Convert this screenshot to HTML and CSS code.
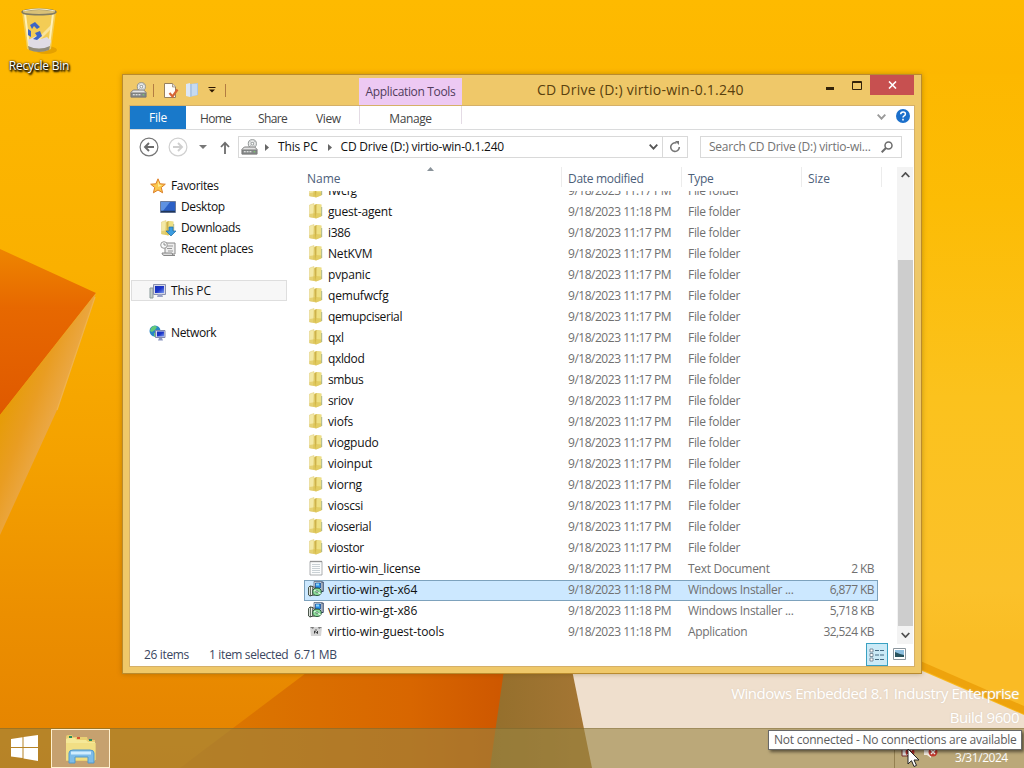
FILE: index.html
```html
<!DOCTYPE html>
<html lang="en">
<head>
<meta charset="utf-8">
<title>CD Drive (D:) virtio-win-0.1.240</title>
<link rel="stylesheet" href="styles.css">
</head>
<body>
<svg class="defs" width="0" height="0" aria-hidden="true">
  <defs>
    <linearGradient id="gScreen" x1="0" y1="0" x2="1" y2="1"><stop offset="0" stop-color="#1430b8"/><stop offset=".5" stop-color="#1c35c8"/><stop offset="1" stop-color="#7b9af0"/></linearGradient>
    <symbol id="folder" viewBox="0 0 16 16">
      <path d="M1.500 2 6 .5v14L1.500 14z" fill="#f3e9a6" stroke="#e0cd78" stroke-width=".5"/>
      <path d="M6 2 8 1l5.500.5v12L8 15.500 5 14z" fill="#e7d577"/>
      <path d="M6.500 2.500 8.500 1v9L7 15.200z" fill="#c4a63c" opacity=".75"/>
      <path d="M8.800 1.500 13 2v11l-4.500 1.500z" fill="#eee083"/>
      <path d="M1.500 11 8 10l5.500.5V13L8 15.500 1.500 14z" fill="#d9be48" opacity=".55"/>
      <path d="M13.700 4v9" stroke="#98a878" stroke-width=".8"/>
    </symbol>
    <symbol id="drive" viewBox="0 0 18 18">
      <circle cx="12" cy="5" r="4.300" fill="#e9eaea" stroke="#8a8f8f"/>
      <path d="m9 2 6 6M15 2 9 8" stroke="#a5acae" stroke-width=".7"/>
      <circle cx="12" cy="5" r="1.400" fill="#fff" stroke="#747979" stroke-width=".7"/>
      <path d="M3.500 8.500h11L17 11v5H1v-5z" fill="#e4e4e4" stroke="#777"/>
      <path d="M1.500 11.500h15v4h-15z" fill="#858989" stroke="#666" stroke-width=".6"/>
      <path d="M3 13.500h9" stroke="#fff" stroke-dasharray="2 1"/><path d="M13.500 13.500H15" stroke="#77df63"/>
    </symbol>
    <symbol id="msi" viewBox="0 0 16 16">
      <path d="M6 .5h7.500v8.500H6z" fill="#dfe5ea" stroke="#5b6b80" stroke-width=".8"/>
      <path d="M7.500 2h5v5h-5z" fill="#2a8fe6" stroke="#0f4590" stroke-width=".7"/>
      <path d="M8 2.500h3v2H8z" fill="#8bd6fb"/>
      <path d="M13.500 1h1.700v9.500h-2" fill="#c3cad2" stroke="#1c2e52" stroke-width=".9"/>
      <path d="M.6 6.500 2 5l3 .5V14l-3 1-1.400-1z" fill="#e9efe8" stroke="#263226" stroke-width=".9"/>
      <path d="M2.500 5v10" stroke="#455144" stroke-width=".8"/>
      <path d="M5 6.500 7 6v8l-2 .5z" fill="#fff" stroke="#333" stroke-width=".6"/>
      <ellipse cx="9" cy="10.800" rx="4.300" ry="3.700" fill="#8edd9a" stroke="#1c4a2b" stroke-width=".9"/>
      <path d="m6 9.500 3 1 3.500 2.500" stroke="#f0fff1" stroke-width="1.300"/><circle cx="9" cy="10.800" r="1.100" fill="#fff" stroke="#14502a" stroke-width=".6"/>
    </symbol>
    <symbol id="doc" viewBox="0 0 16 16">
      <path d="M2 1.500h12v13.500H2z" fill="#fbfcfc" stroke="#9a9d9e" stroke-width=".8"/>
      <path d="M2.500 1.500h11" stroke="#777" stroke-width="1.500" stroke-dasharray="1 1"/>
      <path d="M4 4.500h8M4 6.500h8M4 8.500h8M4 10.500h8M4 12.500h8" stroke="#bec5ca" stroke-width=".8"/>
    </symbol>
    <symbol id="app" viewBox="0 0 16 16">
      <path d="M2 4h12l-1 9H3z" fill="#d5d5d5"/><path d="M2 4h4L5 6zM14 4h-4l1 2z" fill="#777"/>
      <path d="M6.500 10.500V8l3 2.500V8" stroke="#3b3b3b" fill="none"/><circle cx="8" cy="7" r=".8" fill="#555"/>
    </symbol>
  </defs>
</svg>

<div class="screen">
  <svg class="wallpaper" width="1024" height="768" viewBox="0 0 1024 768" preserveAspectRatio="none">
    <defs>
      <linearGradient id="sky" x1="0" y1="0" x2="0" y2="1"><stop offset="0" stop-color="#feba00"/><stop offset=".35" stop-color="#fab000"/><stop offset=".6" stop-color="#f4a100"/><stop offset=".8" stop-color="#ec8f00"/><stop offset="1" stop-color="#e48200"/></linearGradient>
      <linearGradient id="right" gradientUnits="userSpaceOnUse" x1="0" y1="74" x2="0" y2="720"><stop offset="0" stop-color="#fdb800"/><stop offset=".2" stop-color="#fcbc05"/><stop offset=".5" stop-color="#fbc21d"/><stop offset=".8" stop-color="#fbc12a"/><stop offset="1" stop-color="#f8b71c"/></linearGradient>
      <linearGradient id="petal" x1="0" y1="0" x2="0" y2="1"><stop offset="0" stop-color="#ee8500"/><stop offset=".35" stop-color="#e76800"/><stop offset="1" stop-color="#df5900"/></linearGradient>
      <linearGradient id="fold" gradientUnits="userSpaceOnUse" x1="10" y1="385" x2="62" y2="405"><stop offset="0" stop-color="#e69c05"/><stop offset=".5" stop-color="#e99d22"/><stop offset="1" stop-color="#eba94a"/></linearGradient>
      <linearGradient id="rust" x1="0" x2="1"><stop offset="0" stop-color="#dd7a00"/><stop offset=".7" stop-color="#d86600"/><stop offset="1" stop-color="#cd5600"/></linearGradient>
      <linearGradient id="brown" x1="0" x2="1"><stop offset="0" stop-color="#946f2c"/><stop offset="1" stop-color="#a77735"/></linearGradient>
    </defs>
    <path fill="url(#sky)" d="M0 0h1024v768H0z"/>
    <path fill="url(#right)" d="M600 74h424v694H600z"/>
    <path fill="url(#petal)" d="M0 249 96 293 0 415z"/>
    <path fill="url(#fold)" d="M96 293 0 415v120L57 410z"/>
    <path d="M95 297 57 410" stroke="#efb350" stroke-width="1.200" fill="none"/>
    <path fill="url(#rust)" d="M310 670h200v98H180z"/>
    <path fill="url(#brown)" d="M504 670h72l24 98H490z"/>
    <path fill="#efdfcd" d="M572 670h348l104 45v53H592z"/>
    <path fill="#fabb25" d="M918 640h106v70L918 665z"/>
    <path fill="#eea30c" d="m918 660 106 46v8L918 668z"/>
  </svg>

  <div class="desktop-icon">
    <svg width="40" height="48" viewBox="0 0 40 48">
      <ellipse cx="27" cy="43" rx="11" ry="4" fill="#c78500" opacity=".45"/>
      <path d="M3 5h34l-5 37q-11 6-24 0z" fill="#f1cf64" opacity=".85"/>
      <path d="M6 7 10 39M34 7l-4 32" stroke="#fff0b6" stroke-width="2"/>
      <path d="m9 33 8-4 5 3 6-2 4 4-2 7q-10 4-20 0z" fill="#e0dce5"/>
      <path d="M9 39q11 5 22 0l-1 4q-10 4-20 0z" fill="#918b79"/>
      <path d="m20 30 12-12v4L20 34z" fill="#faeaae" opacity=".8"/>
      <path d="m11 18 5-3 5 5-3 2-3-3-2 3zM9 22l3 2v6l-3-2zM16 26l5-2 2 5-5 4-4-1 4-3z" fill="#3d65c6"/>
      <ellipse cx="20" cy="5" rx="17" ry="2.800" fill="#d9c177" stroke="#827b60" stroke-width="1.500"/>
      <path d="M4 4q16-4 32 0" stroke="#f6eecf" fill="none"/>
    </svg>
    <span>Recycle Bin</span>
  </div>

  <div class="watermark"><div class="wm1">Windows Embedded 8.1 Industry Enterprise</div><div class="wm2">Build 9600</div></div>

  <main class="window">
    <header class="titlebar">
      <div class="quick">
        <svg width="17" height="17"><use href="#drive"/></svg>
        <i class="vsep s1"></i>
        <svg class="props" width="16" height="17" viewBox="0 0 16 17"><path d="M1.500 1.500h8l3 3v11h-11z" fill="#fffdfa" stroke="#98805c"/><path d="M9.500 1.500v3.500H13" fill="#ddd" stroke="#98805c" stroke-width=".7"/><path d="m6.500 11 3 3.500 5-7" fill="none" stroke="#d76535" stroke-width="2.200"/></svg>
        <svg class="newf" width="14" height="16" viewBox="0 0 14 16"><path d="m1 2 4-1v14l-4-1z" fill="#dce7f6"/><path d="m5 2 8-1v12l-8 2z" fill="#aec7e4"/><path d="M7 2h5v11l-5 1z" fill="#c6daf0"/></svg>
        <svg class="qarrow" width="8" height="6" viewBox="0 0 8 6"><path d="M.5.500h7" stroke="#2b1500"/><path d="M1 2.500h6L4 5.500z" fill="#2b1500"/></svg>
        <i class="vsep s2"></i>
      </div>
      <div class="tools-tab"><span class="t-tools">Application Tools</span></div>
      <h1><span class="t-title">CD Drive (D:) virtio-win-0.1.240</span></h1>
      <div class="captions">
        <svg width="8" height="3"><path fill="#33230a" d="M0 0h8v3H0z"/></svg>
        <svg class="max" width="10" height="9"><path d="M.5 2V.5h9v8h-9z" fill="none" stroke="#33230a"/><path d="M0 1.500h10" stroke="#33230a"/></svg>
        <div class="close"><svg width="9" height="8" viewBox="0 0 9 8"><path d="m1 .5 7 7m0-7-7 7" stroke="#fff" stroke-width="1.600"/></svg></div>
      </div>
    </header>

    <div class="client">
      <nav class="ribbon">
        <div class="file">File</div><div class="tab home">Home</div><div class="tab share">Share</div><div class="tab view">View</div><div class="manage">Manage</div>
        <svg class="expand" width="9" height="6" viewBox="0 0 9 6"><path d="m.7.700 3.800 4 3.800-4" stroke="#9a9a9a" stroke-width="1.900" fill="none"/></svg>
        <svg class="help" width="14" height="14" viewBox="0 0 14 14"><circle cx="7" cy="7" r="7" fill="#1b6fcb"/><path d="M4.700 5.300q0-2.300 2.400-2.300 2.300 0 2.300 2 0 1.200-1.300 1.900Q7 7.500 7 8.600" fill="none" stroke="#fff" stroke-width="1.500"/><path d="M6.200 9.800h1.600v1.600H6.200z" fill="#fff"/></svg>
      </nav>

      <div class="addressbar">
        <svg class="back" width="20" height="20" viewBox="0 0 20 20"><circle cx="10" cy="10" r="8.900" fill="#fff" stroke="#777" stroke-width="1.200"/><path d="M15 10H6m4-4-4 4 4 4" fill="none" stroke="#6b6b6b" stroke-width="1.900"/></svg>
        <svg class="fwd" width="20" height="20" viewBox="0 0 20 20"><circle cx="10" cy="10" r="8.900" fill="#fff" stroke="#d0d0d0" stroke-width="1.200"/><path d="M5 10h9m-4-4 4 4-4 4" fill="none" stroke="#cfcfcf" stroke-width="1.900"/></svg>
        <svg class="hist" width="8" height="4"><path d="M0 0h8L4 4z" fill="#777"/></svg>
        <svg class="up" width="10" height="13" viewBox="0 0 10 13"><path d="M5 13V1.500M1 6l4-4.300L9 6" fill="none" stroke="#6d6d6d" stroke-width="1.800"/></svg>
        <div class="path">
          <svg class="pdrive" width="17" height="17"><use href="#drive"/></svg>
          <svg class="crumb c1" width="4" height="7"><path d="m0 0 4 3.500L0 7z" fill="#666"/></svg>
          <span class="t-pc">This PC</span>
          <svg class="crumb c2" width="4" height="7"><path d="m0 0 4 3.500L0 7z" fill="#666"/></svg>
          <span class="t-cd">CD Drive (D:) virtio-win-0.1.240</span>
          <svg class="drop" width="9" height="6" viewBox="0 0 9 6"><path d="m.7.700 3.800 4 3.800-4" stroke="#555" stroke-width="1.800" fill="none"/></svg>
          <div class="refresh"><svg width="12" height="12" viewBox="0 0 12 12"><path d="M7.500 2.100A4.300 4.300 0 1 0 10.300 6" fill="none" stroke="#757575" stroke-width="1.600"/><path d="M6 0h4v4z" fill="#757575"/></svg></div>
        </div>
        <div class="search"><span class="t-search">Search CD Drive (D:) virtio-wi...</span><svg width="12" height="12" viewBox="0 0 12 12"><circle cx="7.500" cy="4.500" r="3.500" fill="none" stroke="#6c6c6c" stroke-width="1.500"/><path d="M5 7 .7 11.300" stroke="#6c6c6c" stroke-width="2"/></svg></div>
      </div>

      <div class="body">
        <aside class="side">
          <div class="node root"><svg width="16" height="16" viewBox="0 0 16 16"><path d="m8 .8 2.100 5 5.200.4-4 3.300 1.300 5.300L8 12l-4.600 2.800 1.300-5.300-4-3.300 5.200-.4z" fill="#fbc84d" stroke="#dc7e27"/><path d="m8 3 1.200 3.700 3 .4-4 2z" fill="#fff09a"/></svg><span class="t-fav">Favorites</span></div>
          <div class="node"><svg width="16" height="16" viewBox="0 0 16 16"><path d="M.5 2.500h15v11H.5z" fill="#2b60c6" stroke="#6b7c9c"/><path d="M1 3h9L3 12H1z" fill="#5e92e2"/><path d="M1 12.500h14" stroke="#203659" stroke-width="1.500"/></svg><span class="t-desk">Desktop</span></div>
          <div class="node"><svg width="16" height="16"><use href="#folder"/><path d="M9 7h4v4h3l-5 5-5-5h3z" fill="#3c9ce0" stroke="#1d6ba8" stroke-width=".7"/></svg><span class="t-down">Downloads</span></div>
          <div class="node"><svg width="16" height="16" viewBox="0 0 16 16"><path d="M5 2h10v11H5z" fill="#eee" stroke="#888"/><path d="M7 5h6M7 7.500h5M8 10h5" stroke="#999"/><path d="M2 12h10q0 3 3 2.500H4Q2 14 2 12z" fill="#ddd" stroke="#888"/><circle cx="4" cy="4" r="3.300" fill="#f8fafa" stroke="#999"/><path d="M4 2v2h2" fill="none" stroke="#777" stroke-width=".8"/></svg><span class="t-recent">Recent places</span></div>
          <div class="node root this"><svg width="17" height="16" viewBox="0 0 17 16"><path d="M1 5h3v10H1z" fill="#c5ccc7" stroke="#899"/><path d="M4.500 1.500h12v10h-12z" fill="#d6d9e8" stroke="#8990ae"/><path d="M6 3h9v7H6z" fill="url(#gScreen)"/><path d="M9 11h4l1 3H8z" fill="#9aa3c5"/></svg><span class="t-this">This PC</span></div>
          <div class="node root"><svg width="17" height="16" viewBox="0 0 17 16"><circle cx="6" cy="6" r="5.500" fill="#2986c6"/><path d="M2 3q3-4 6-1L6 5 3 7 1 6zM5 8l4-1-1 4-3 1z" fill="#63c978"/><path d="M6.500 5.500h9.500v7H6.500z" fill="#d7daec" stroke="#8289ad"/><path d="M8 6.500h7v5H8z" fill="url(#gScreen)"/><path d="M10 13h3l1 2.500H9z" fill="#8e98c1"/></svg><span class="t-net">Network</span></div>
        </aside>

        <section class="files">
          <svg class="sort" width="7" height="4"><path d="M0 4 3.500 0 7 4z" fill="#8a939a"/></svg>
          <div class="heads"><span class="h-name">Name</span><span class="h-date">Date modified</span><span class="h-type">Type</span><span class="h-size">Size</span></div>
          <div class="rows">
            <div class="row"><svg><use href="#folder"/></svg><b>fwcfg</b><i>9/18/2023 11:17 PM</i><em>File folder</em><u></u></div>
            <div class="row"><svg><use href="#folder"/></svg><b>guest-agent</b><i>9/18/2023 11:18 PM</i><em>File folder</em><u></u></div>
            <div class="row"><svg><use href="#folder"/></svg><b class="tight">i386</b><i>9/18/2023 11:17 PM</i><em>File folder</em><u></u></div>
            <div class="row"><svg><use href="#folder"/></svg><b>NetKVM</b><i>9/18/2023 11:17 PM</i><em>File folder</em><u></u></div>
            <div class="row"><svg><use href="#folder"/></svg><b>pvpanic</b><i>9/18/2023 11:17 PM</i><em>File folder</em><u></u></div>
            <div class="row"><svg><use href="#folder"/></svg><b>qemufwcfg</b><i>9/18/2023 11:17 PM</i><em>File folder</em><u></u></div>
            <div class="row"><svg><use href="#folder"/></svg><b class="tight">qemupciserial</b><i>9/18/2023 11:17 PM</i><em>File folder</em><u></u></div>
            <div class="row"><svg><use href="#folder"/></svg><b class="tight">qxl</b><i>9/18/2023 11:17 PM</i><em>File folder</em><u></u></div>
            <div class="row"><svg><use href="#folder"/></svg><b class="tight">qxldod</b><i>9/18/2023 11:17 PM</i><em>File folder</em><u></u></div>
            <div class="row"><svg><use href="#folder"/></svg><b class="tight">smbus</b><i>9/18/2023 11:17 PM</i><em>File folder</em><u></u></div>
            <div class="row"><svg><use href="#folder"/></svg><b class="tight">sriov</b><i>9/18/2023 11:17 PM</i><em>File folder</em><u></u></div>
            <div class="row"><svg><use href="#folder"/></svg><b>viofs</b><i>9/18/2023 11:17 PM</i><em>File folder</em><u></u></div>
            <div class="row"><svg><use href="#folder"/></svg><b>viogpudo</b><i>9/18/2023 11:17 PM</i><em>File folder</em><u></u></div>
            <div class="row"><svg><use href="#folder"/></svg><b>vioinput</b><i>9/18/2023 11:17 PM</i><em>File folder</em><u></u></div>
            <div class="row"><svg><use href="#folder"/></svg><b>viorng</b><i>9/18/2023 11:17 PM</i><em>File folder</em><u></u></div>
            <div class="row"><svg><use href="#folder"/></svg><b>vioscsi</b><i>9/18/2023 11:17 PM</i><em>File folder</em><u></u></div>
            <div class="row"><svg><use href="#folder"/></svg><b class="tight">vioserial</b><i>9/18/2023 11:17 PM</i><em>File folder</em><u></u></div>
            <div class="row"><svg><use href="#folder"/></svg><b class="tight">viostor</b><i>9/18/2023 11:17 PM</i><em>File folder</em><u></u></div>
            <div class="row"><svg><use href="#doc"/></svg><b>virtio-win_license</b><i>9/18/2023 11:17 PM</i><em>Text Document</em><u>2 KB</u></div>
            <div class="row selected"><svg><use href="#msi"/></svg><b class="guest">virtio-win-gt-x64</b><i>9/18/2023 11:18 PM</i><em>Windows Installer ...</em><u>6,877 KB</u></div>
            <div class="row"><svg><use href="#msi"/></svg><b class="guest">virtio-win-gt-x86</b><i>9/18/2023 11:18 PM</i><em>Windows Installer ...</em><u>5,718 KB</u></div>
            <div class="row"><svg><use href="#app"/></svg><b class="guest">virtio-win-guest-tools</b><i>9/18/2023 11:18 PM</i><em>Application</em><u>32,524 KB</u></div>
          </div>
        </section>

        <div class="scroll">
          <svg width="9" height="6" viewBox="0 0 9 6"><path d="m.7 5 3.800-4 3.800 4" stroke="#505050" stroke-width="1.800" fill="none"/></svg>
          <div class="thumb"></div>
          <svg width="9" height="6" viewBox="0 0 9 6"><path d="m.7 1 3.800 4 3.800-4" stroke="#505050" stroke-width="1.800" fill="none"/></svg>
        </div>
      </div>

      <footer class="status">
        <span class="t-items">26 items</span><span class="t-sel">1 item selected</span><span class="t-mb">6.71 MB</span>
        <div class="details"><svg width="16" height="14" viewBox="0 0 16 14"><path d="M1 1h3v3H1zM1 5.500h3v3H1zM1 10h3v3H1z" fill="#fff" stroke="#678" stroke-width=".8"/><path d="M6 2.500h10M6 7h10M6 11.500h10" stroke="#456982" stroke-dasharray="4 1"/></svg></div>
        <svg class="large" width="13" height="12" viewBox="0 0 13 12"><path d="M.5.500h12v11H.5z" fill="#fff" stroke="#8c969d"/><path d="M2 2h9v7H2z" fill="#8dbfdf"/><path d="m2 4 5 2 4 1v2H2z" fill="#28525c"/></svg>
      </footer>
    </div>
  </main>

  <footer class="taskbar">
    <svg class="start" width="28" height="26" viewBox="0 0 28 26"><path d="M0 4 11.500 2.200V12H0zM12.500 2 27 0v12H12.500zM0 13h11.500v10L0 21.500zM12.500 13H27v13l-14.500-2.500z" fill="#fff"/></svg>
    <div class="task"><svg width="34" height="30" viewBox="0 0 34 30"><path d="M2 3q0-2 2-2h4l1 2h14l1 3h7v21H2z" fill="#e9cf72"/><path d="M5 2h3v2H5zM25 5h3v2h-3z" fill="#2a8b5d"/><path d="M13 3h3v2h-3z" fill="#d75332"/><path d="M4 4h7l2 2h9l2 2h7v18H2V5z" fill="#f5e898"/><path d="M2 9h30v17H2z" fill="#efda7c" opacity=".7"/><path d="M5 29V19q0-3 4-3h17q4 0 4 3v10h-6v-6H11v6z" fill="#7dbce9" stroke="#5599c8"/><path d="M7 19h20" stroke="#d0edff" stroke-width="3"/></svg></div>
    <div class="tray">
      <i class="traybox"></i>
      <svg class="net" width="15" height="12" viewBox="0 0 15 12"><path d="M1 1h11v8H1z" fill="#ddd" stroke="#742e29"/><circle cx="9" cy="5" r="4.500" fill="#b32d29"/><path d="m6 2 6 6m0-6-6 6" stroke="#fff"/></svg>
      <svg class="vol" width="15" height="12" viewBox="0 0 15 12"><path d="M1 3h3l4-3v11L4 8H1z" fill="#f5eee3"/><circle cx="10" cy="5" r="4.500" fill="#c13a30"/><path d="m8 3 4 4m0-4-4 4" stroke="#fff" stroke-width="1.400"/></svg>
      <span class="date">3/31/2024</span>
    </div>
  </footer>
  <div class="tip"><span class="t-tip">Not connected - No connections are available</span></div>
  <svg class="cursor" width="13" height="20" viewBox="0 0 13 20"><path d="M1 1v15l3.500-3.300L7 18.500l2.500-1.100L7 12h5z" fill="#fff" stroke="#222"/></svg>
</div>
</body>
</html>
```

FILE: styles.css
```css
* { box-sizing: border-box; }
body { margin: 0; font: 12px/21px "Open Sans", "Noto Sans", sans-serif; color: #111; }
svg { display: block; flex: none; }
.defs { position: absolute; }
.screen { position: relative; width: 1024px; height: 768px; overflow: hidden; }
.wallpaper { position: absolute; inset: 0; }
span, b, i, em, u { font-style: normal; font-weight: 400; text-decoration: none; white-space: nowrap; }

.desktop-icon { position: absolute; left: 0; top: 7px; width: 78px; display: flex; flex-direction: column; align-items: center; color: #fff; line-height: 16px; text-shadow: 1px 1px 2px #000, 1px 2px 2px #000, 0 0 2px #000; letter-spacing: -.2px; }
.desktop-icon span { margin-top: 3px; }
.watermark { position: absolute; right: 5px; top: 681px; text-align: right; color: #fff; font-size: 15px; line-height: 24px; letter-spacing: -.46px; text-shadow: 0 0 2px #d9cbb9; }

.window { position: absolute; left: 122px; top: 74px; width: 800px; height: 600px; border: 1px solid #b98b2f; background: #efc869; box-shadow: 0 0 5px rgba(90, 60, 0, .35); padding: 0 7px; }
.titlebar { height: 30px; display: flex; align-items: stretch; }
.quick { width: 229px; display: flex; align-items: center; flex: none; }
.vsep { width: 1px; height: 13px; background: #b27c42; }
.s1 { margin-left: 6px; }
.props { margin-left: 9px; }
.newf { margin-left: 6px; }
.qarrow { margin-left: 9px; }
.s2 { margin-left: 9px; }
.tools-tab { width: 103px; margin-top: 3px; background: #edc9f3; color: #503c5c; text-align: center; line-height: 27px; flex: none; letter-spacing: -.34px; }
h1 { flex: 1; margin: 0; padding-left: 75px; font-size: 14px; font-weight: 400; line-height: 29px; color: #59400e; letter-spacing: .25px; }
.captions { display: flex; width: 88px; flex: none; }
.captions > svg:first-child { margin-top: 12px; }
.captions .max { margin: 6px 8px 0 18px; }
.close { width: 45px; height: 20px; background: #c75050; display: grid; place-items: center; }

.client { height: 562px; border: 1px solid #d5b068; background: #fff; display: flex; flex-direction: column; width: 786px; margin-left: -1px; }
.ribbon { height: 24px; border-bottom: 1px solid #dadbdc; display: flex; line-height: 25px; color: #444; flex: none; }
.file { width: 56px; background: #1979ca; color: #fff; text-align: center; line-height: 23px; letter-spacing: -.2px; }
.home { margin-left: 14px; width: 58px; letter-spacing: -.7px; }
.share { width: 58px; letter-spacing: -.6px; }
.view { width: 43px; letter-spacing: -.4px; }
.manage { width: 103px; text-align: center; border: solid #e4dbe5; border-width: 0 1px; height: 18px; letter-spacing: -.4px; }
.expand { margin: 8px 0 0 415px; }
.help { margin: 3px 0 0 10px; }

.addressbar { height: 37px; display: flex; align-items: center; flex: none; padding: 0 0 3px 9px; }
.fwd { margin-left: 9px; }
.hist { margin-left: 11px; }
.up { margin-left: 13px; }
.path { margin-left: 8px; width: 450px; height: 22px; border: 1px solid #d9d9d9; display: flex; align-items: center; line-height: 20px; }
.pdrive { margin-left: 2px; }
.c1 { margin: 0 9px 0 7px; }
.c2 { margin: 0 9px 0 10px; }
.t-pc { letter-spacing: -.15px; }
.t-cd { letter-spacing: -.22px; }
.drop { margin-left: auto; }
.refresh { width: 25px; height: 20px; margin-left: 4px; border-left: 1px solid #d9d9d9; display: grid; place-items: center; }
.search { width: 202px; height: 22px; margin-left: 12px; border: 1px solid #d9d9d9; padding: 0 8px; display: flex; align-items: center; justify-content: space-between; color: #737373; line-height: 20px; }
.t-search { letter-spacing: -.23px; }

.body { display: flex; height: 477px; flex: none; }
.side { width: 174px; padding-top: 8px; flex: none; }
.node { display: flex; height: 21px; align-items: center; padding-left: 30px; width: 157px; letter-spacing: -.35px; }
.node span { margin-left: 5px; }
.node.root { padding-left: 20px; }
.node.root span { margin-left: 5px; }
.node.root:last-child { padding-left: 19px; }
.node.this { margin: 21px 0 21px 1px; background: #f7f7f7; border: 1px solid #dedede; padding-left: 17px; width: 156px; letter-spacing: -.1px; }

.files { position: relative; width: 590px; display: flex; flex-direction: column; flex: none; }
.sort { position: absolute; left: 123px; top: 0; }
.heads { height: 24px; display: flex; line-height: 24px; color: #4c607a; flex: none; }
.heads span { height: 20px; border-right: 1px solid #ececec; padding-left: 6px; }
.heads .h-name { width: 258px; padding-left: 3px; }
.h-date, .h-type { width: 120px; letter-spacing: -.3px; }
.h-size { width: 80px; }
.rows { height: 453px; overflow: hidden; display: flex; flex-direction: column; justify-content: flex-end; padding-bottom: 1px; }
.row { display: flex; height: 21px; width: 574px; line-height: 20px; flex: none; color: #707070; }
.row svg { width: 16px; height: 16px; margin: 1px 4px 0 4px; }
.row b { width: 240px; color: #111; letter-spacing: -.18px; }
.row .tight { letter-spacing: -.36px; }
.row .guest { letter-spacing: -.08px; }
.row i { width: 120px; letter-spacing: -.48px; }
.row em { width: 115px; letter-spacing: -.3px; }
.row u { width: 71px; text-align: right; letter-spacing: -.56px; }
.row.selected { background: #cce8ff; outline: 1px solid #7da2bd; outline-offset: -1px; }

.scroll { width: 16px; height: 477px; margin-left: 3px; background: #f3f3f3; display: flex; flex-direction: column; align-items: center; padding: 5px 0 6px; }
.thumb { width: 15px; height: 366px; background: #cdcdcd; margin: auto 0 6px; }

.status { flex: 1; display: flex; padding-left: 14px; color: #3a4660; line-height: 22px; }
.status span { flex: none; }
.t-items { width: 65px; letter-spacing: -.35px; }
.t-sel { width: 85px; letter-spacing: -.35px; }
.t-mb { letter-spacing: -.4px; }
.details { width: 22px; height: 23px; margin: -1px 0 0 auto; border: 1px solid #3aa1c2; background: #cbeaf7; display: grid; place-items: center; }
.large { margin: 4px 8px 0 5px; }

.taskbar { position: absolute; left: 0; top: 728px; width: 1024px; height: 40px; background: rgba(151, 131, 65, .6); border-top: 1px solid rgba(100, 80, 30, .3); display: flex; }
.start { margin: 6px 0 0 11px; }
.task { width: 59px; height: 39px; margin-left: 12px; border: 1px solid #fff0cf; background: #c6a16f; display: grid; place-items: center; }
.tray { margin-left: auto; display: flex; width: 130px; padding-top: 18px; color: #fff; }
.traybox { width: 20px; border-left: 1px solid #948051; margin-right: -13px; }
.vol { margin-left: 7px; }
.date { margin-left: 17px; line-height: 21px; letter-spacing: -.45px; }
.tip { position: absolute; left: 768px; top: 730px; width: 254px; height: 20px; background: #fff; border: 1px solid #686868; box-shadow: 2px 2px 3px rgba(0,0,0,.5); color: #5c5c5c; padding-left: 5px; line-height: 18px; letter-spacing: -.24px; }
.cursor { position: absolute; left: 907px; top: 748px; }
```
